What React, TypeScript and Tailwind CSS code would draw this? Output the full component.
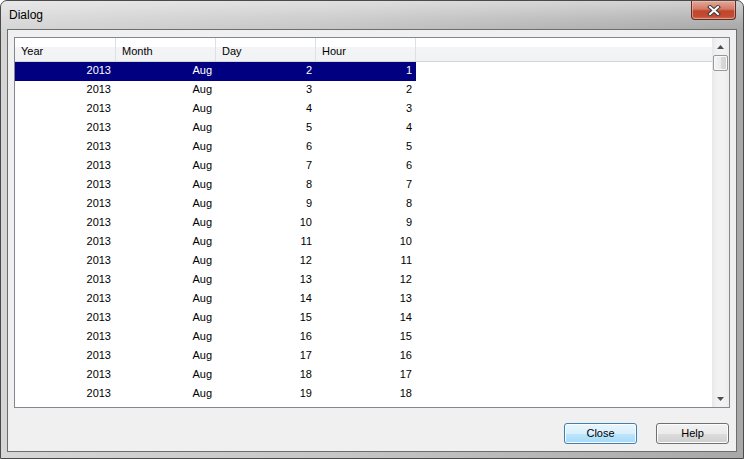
import React from "react";

const rows = Array.from({ length: 18 }, (_, i) => ({
  year: 2013,
  month: "Aug",
  day: i + 2,
  hour: i + 1,
}));

const cols = [
  { name: "Year", w: "w-[101px]" },
  { name: "Month", w: "w-[100px]" },
  { name: "Day", w: "w-[100px]" },
  { name: "Hour", w: "w-[100px]" },
];

export default function App() {
  return (
    <div className="w-[744px] h-[459px] bg-white overflow-hidden font-['Liberation_Sans',Arial,sans-serif]">
      <div className="w-[744px] h-[459px] flex flex-col rounded-t-[7px] border border-[#4a4a4a] bg-[linear-gradient(to_right,#d6d6d6_0%,#c6c6c6_45%,#a8a8a8_100%)]">
        {/* Title bar */}
        <div className="h-[28px] flex items-start bg-[linear-gradient(to_bottom,rgba(255,255,255,0.45)_0%,rgba(255,255,255,0.15)_60%,rgba(255,255,255,0)_100%)] rounded-t-[6px]">
          <div className="pl-[8px] pt-[6px] text-[12px] leading-[16px] text-black">Dialog</div>
          <div className="ml-auto mr-[7px] w-[45px] h-[19px] rounded-b-[4px] border border-t-0 border-[#5e2f26] bg-[linear-gradient(to_bottom,#e4a898_0%,#d27a66_45%,#c2452c_55%,#c24b33_85%,#d0705a_100%)] shadow-[inset_0_0_0_1px_rgba(255,200,190,0.5)] flex items-center justify-center">
            <svg width="14" height="11" viewBox="0 0 14 11">
              <path d="M3 2 L11 9 M11 2 L3 9" stroke="#3b3b3b" strokeWidth="4" strokeLinecap="square" />
              <path d="M3 2 L11 9 M11 2 L3 9" stroke="#ffffff" strokeWidth="2" strokeLinecap="square" />
            </svg>
          </div>
        </div>
        {/* Client */}
        <div className="mx-[6px] mb-[6px] flex-1 border border-[#6d6d6d] bg-[#f0f0f0] flex flex-col pt-[7px] px-[6px]">
          <div className="h-[371px] border border-[#828790] bg-white flex overflow-hidden">
            <div className="flex-1 flex flex-col overflow-hidden">
              <div className="h-[24px] shrink-0 flex border-b border-[#d5d5d5] bg-[linear-gradient(to_bottom,#ffffff_0%,#ffffff_40%,#f3f4f6_41%,#f1f2f4_100%)]">
                {cols.map((c) => (
                  <div
                    key={c.name}
                    className={`${c.w} h-full border-r border-[#dde0e5] pl-[6px] pt-[3px] flex items-center text-[11px] text-black`}
                  >
                    {c.name}
                  </div>
                ))}
                <div className="flex-1" />
              </div>
              {rows.map((r, i) => {
                const sel = i === 0;
                return (
                  <div
                    key={i}
                    className={`h-[19px] shrink-0 w-[401px] flex text-[11px] ${sel ? "bg-[#000080] text-white" : "text-black"}`}
                  >
                    <div className="w-[101px] pr-[5px] text-right leading-[17px]">{r.year}</div>
                    <div className="w-[100px] pr-[4px] text-right leading-[17px]">{r.month}</div>
                    <div className="w-[100px] pr-[4px] text-right leading-[17px]">{r.day}</div>
                    <div className="w-[100px] pr-[4px] text-right leading-[17px]">{r.hour}</div>
                  </div>
                );
              })}
            </div>
            {/* Scrollbar */}
            <div className="w-[17px] shrink-0 flex flex-col bg-[linear-gradient(to_right,#e8e8e8_0%,#f2f2f2_30%,#f2f2f2_70%,#ececec_100%)]">
              <div className="h-[17px] flex items-center justify-center">
                <svg width="7" height="4" viewBox="0 0 7 4">
                  <path d="M3.5 0 L7 4 L0 4 Z" fill="#4d4d4d" />
                </svg>
              </div>
              <div className="mx-[1px] h-[16px] rounded-[2px] border border-[#979797] bg-[linear-gradient(to_right,#f4f4f4_0%,#ebebeb_50%,#d9d9d9_51%,#d2d2d2_100%)] shadow-[inset_0_0_0_1px_#fafafa]" />
              <div className="flex-1" />
              <div className="h-[17px] flex items-center justify-center">
                <svg width="7" height="4" viewBox="0 0 7 4">
                  <path d="M0 0 L7 0 L3.5 4 Z" fill="#4d4d4d" />
                </svg>
              </div>
            </div>
          </div>
          <div className="mt-[15px] mr-[1px] flex justify-end gap-[19px]">
            <button className="w-[73px] h-[21px] rounded-[3px] border border-[#3c7fb1] bg-[linear-gradient(to_bottom,#eaf6fd_0%,#d9f0fc_50%,#bee6fd_51%,#a7d9f5_100%)] shadow-[inset_0_0_0_1px_#fcfdfe] text-[11px] text-black leading-[19px]">
              Close
            </button>
            <button className="w-[73px] h-[21px] rounded-[3px] border border-[#707070] bg-[linear-gradient(to_bottom,#f2f2f2_0%,#ebebeb_50%,#dddddd_51%,#cfcfcf_100%)] shadow-[inset_0_0_0_1px_#fcfcfc] text-[11px] text-black leading-[19px]">
              Help
            </button>
          </div>
        </div>
      </div>
    </div>
  );
}
